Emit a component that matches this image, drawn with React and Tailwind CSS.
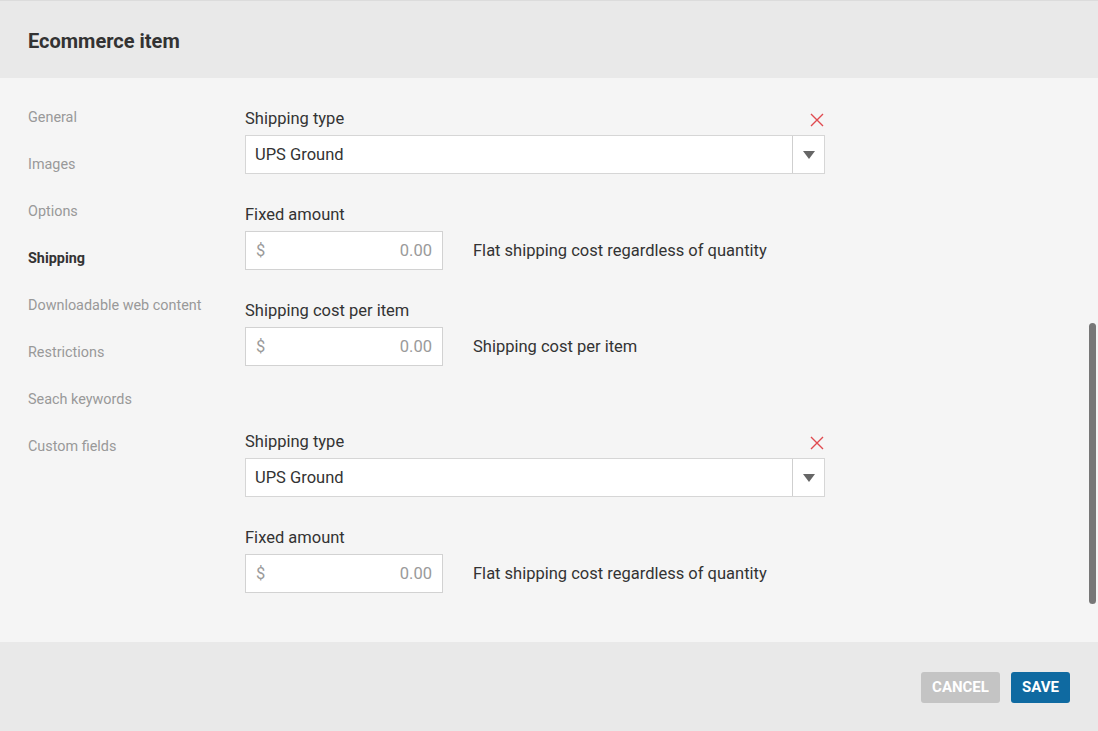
import React from 'react';

const navItems = [
  'General',
  'Images',
  'Options',
  'Shipping',
  'Downloadable web content',
  'Restrictions',
  'Seach keywords',
  'Custom fields',
];

function CloseIcon() {
  return (
    <svg width="14" height="14" viewBox="0 0 14 14" className="block">
      <path d="M1 1 L13 13 M13 1 L1 13" stroke="#e04a4f" strokeWidth="1.4" fill="none" />
    </svg>
  );
}

function SelectField({ value }) {
  return (
    <div className="flex h-[39px] w-[580px] items-stretch border border-[#d6d6d6] bg-white">
      <div className="flex flex-1 items-center pl-[9px] pt-[2px] text-[16.5px] text-[#333]">{value}</div>
      <div className="flex w-[32px] items-center justify-center border-l border-[#cfcfcf]">
        <svg width="12" height="8" viewBox="0 0 12 8">
          <path d="M0 0 H12 L6 8 Z" fill="#666" />
        </svg>
      </div>
    </div>
  );
}

function MoneyField({ label, hint }) {
  return (
    <div className="mt-[30px]">
      <div className="h-[20px] pt-[1px] text-[16.5px] leading-[20px] text-[#333]">{label}</div>
      <div className="mt-[7px] flex items-center">
        <div className="flex h-[39px] w-[198px] items-center justify-between border border-[#d2d2d2] bg-white px-[10px] pt-[2px] text-[16.5px] text-[#9a9a9a]">
          <span>$</span>
          <span>0.00</span>
        </div>
        <div className="ml-[30px] pt-[2px] text-[16.5px] text-[#333]">{hint}</div>
      </div>
    </div>
  );
}

function ShippingBlock({ children }) {
  return (
    <div>
      <div className="flex h-[20px] w-[580px] items-center justify-between">
        <span className="pt-[1px] text-[16.5px] leading-[20px] text-[#333]">Shipping type</span>
        <span className="mr-[1px] mt-[3px]">
          <CloseIcon />
        </span>
      </div>
      <div className="mt-[7px]">
        <SelectField value="UPS Ground" />
      </div>
      {children}
    </div>
  );
}

export default function App() {
  return (
    <div
      className="flex h-[731px] w-[1098px] flex-col bg-[#f5f5f5]"
      style={{ fontFamily: 'Roboto, "Liberation Sans", sans-serif' }}
    >
      {/* Header */}
      <header className="flex h-[78px] shrink-0 items-center border-t border-[#dcdcdc] bg-[#e9e9e9] px-[28px] pt-[2px]">
        <h1 className="text-[20px] font-bold text-[#333]">Ecommerce item</h1>
      </header>

      {/* Body */}
      <div className="flex flex-1">
        <nav className="w-[245px] shrink-0 pl-[28px] pt-[30px]">
          {navItems.map((item) => (
            <div
              key={item}
              className={
                'h-[47px] text-[14.4px] leading-[20px] ' +
                (item === 'Shipping' ? 'font-bold text-[#333]' : 'text-[#999]')
              }
            >
              {item}
            </div>
          ))}
        </nav>

        <main className="flex-1 pt-[30px]">
          <ShippingBlock>
            <MoneyField label="Fixed amount" hint="Flat shipping cost regardless of quantity" />
            <MoneyField label="Shipping cost per item" hint="Shipping cost per item" />
          </ShippingBlock>
          <div className="mt-[65px]">
            <ShippingBlock>
              <MoneyField label="Fixed amount" hint="Flat shipping cost regardless of quantity" />
            </ShippingBlock>
          </div>
        </main>

        <div className="mr-[2px] w-[7px]">
          <div className="mt-[245px] h-[281px] rounded-full bg-[#777]" />
        </div>
      </div>

      {/* Footer */}
      <footer className="flex h-[89px] shrink-0 items-center justify-end gap-[11px] bg-[#e9e9e9] px-[28px]">
        <button className="mt-[1px] h-[31px] w-[79px] rounded-[3px] bg-[#c4c4c4] text-[15px] font-bold text-white">
          CANCEL
        </button>
        <button className="mt-[1px] h-[31px] w-[59px] rounded-[3px] bg-[#0f6aa1] text-[15px] font-bold text-white">
          SAVE
        </button>
      </footer>
    </div>
  );
}
